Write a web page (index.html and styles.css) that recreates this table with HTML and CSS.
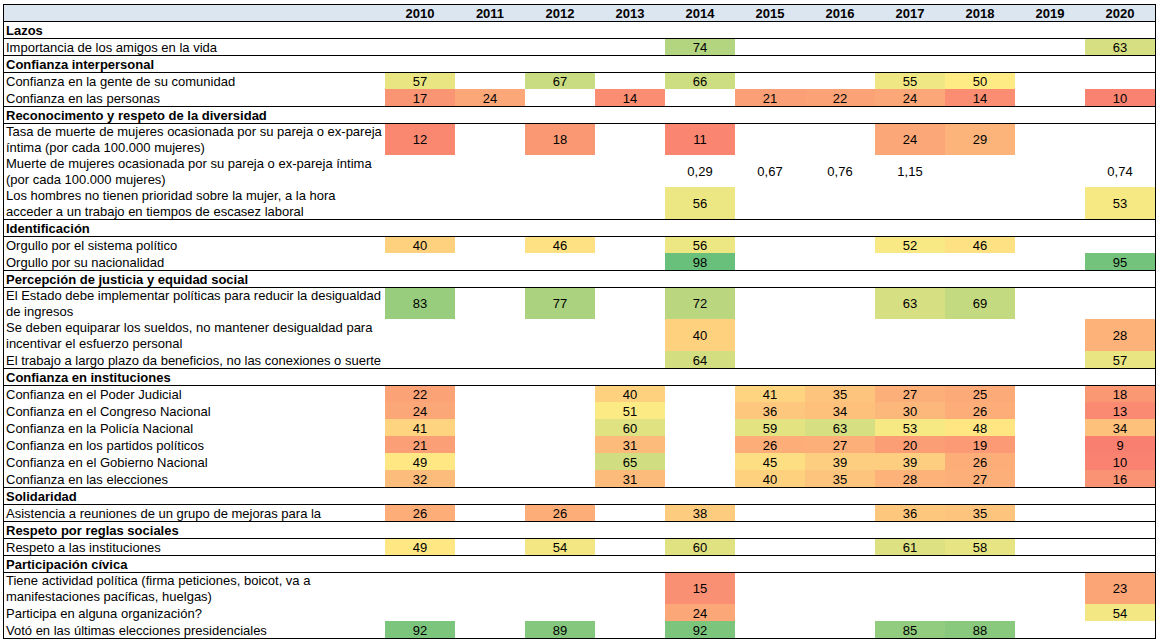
FILE: index.html
```html
<!DOCTYPE html>
<html lang="es">
<head>
<meta charset="utf-8">
<title>Indicadores</title>
<link rel="stylesheet" href="styles.css">
</head>
<body>
<div class="sheet">
  <div class="row head">
    <div class="lbl"></div>
    <div class="c">2010</div><div class="c">2011</div><div class="c">2012</div><div class="c">2013</div><div class="c">2014</div><div class="c">2015</div><div class="c">2016</div><div class="c">2017</div><div class="c">2018</div><div class="c">2019</div><div class="c">2020</div>
  </div>

  <div class="row grp"><div class="lbl">Lazos</div></div>
  <div class="row">
    <div class="lbl">Importancia de los amigos en la vida</div>
    <div class="c"></div><div class="c"></div><div class="c"></div><div class="c"></div><div class="c" data-v="74">74</div><div class="c"></div><div class="c"></div><div class="c"></div><div class="c"></div><div class="c"></div><div class="c" data-v="63">63</div>
  </div>

  <div class="row grp"><div class="lbl">Confianza interpersonal</div></div>
  <div class="row">
    <div class="lbl">Confianza en la gente de su comunidad</div>
    <div class="c" data-v="57">57</div><div class="c"></div><div class="c" data-v="67">67</div><div class="c"></div><div class="c" data-v="66">66</div><div class="c"></div><div class="c"></div><div class="c" data-v="55">55</div><div class="c" data-v="50">50</div><div class="c"></div><div class="c"></div>
  </div>
  <div class="row">
    <div class="lbl">Confianza en las personas</div>
    <div class="c" data-v="17">17</div><div class="c" data-v="24">24</div><div class="c"></div><div class="c" data-v="14">14</div><div class="c"></div><div class="c" data-v="21">21</div><div class="c" data-v="22">22</div><div class="c" data-v="24">24</div><div class="c" data-v="14">14</div><div class="c"></div><div class="c" data-v="10">10</div>
  </div>

  <div class="row grp"><div class="lbl">Reconocimento y respeto de la diversidad</div></div>
  <div class="row tall">
    <div class="lbl">Tasa de muerte de mujeres ocasionada por su pareja o ex-pareja<br>íntima (por cada 100.000 mujeres)</div>
    <div class="c" data-v="12">12</div><div class="c"></div><div class="c" data-v="18">18</div><div class="c"></div><div class="c" data-v="11">11</div><div class="c"></div><div class="c"></div><div class="c" data-v="24">24</div><div class="c" data-v="29">29</div><div class="c"></div><div class="c"></div>
  </div>
  <div class="row tall">
    <div class="lbl">Muerte de mujeres ocasionada por su pareja o ex-pareja íntima<br>(por cada 100.000 mujeres)</div>
    <div class="c"></div><div class="c"></div><div class="c"></div><div class="c"></div><div class="c">0,29</div><div class="c">0,67</div><div class="c">0,76</div><div class="c">1,15</div><div class="c"></div><div class="c"></div><div class="c">0,74</div>
  </div>
  <div class="row tall">
    <div class="lbl">Los hombres no tienen prioridad sobre la mujer, a la hora<br>acceder a un trabajo en tiempos de escasez laboral</div>
    <div class="c"></div><div class="c"></div><div class="c"></div><div class="c"></div><div class="c" data-v="56">56</div><div class="c"></div><div class="c"></div><div class="c"></div><div class="c"></div><div class="c"></div><div class="c" data-v="53">53</div>
  </div>

  <div class="row grp"><div class="lbl">Identificación</div></div>
  <div class="row">
    <div class="lbl">Orgullo por el sistema político</div>
    <div class="c" data-v="40">40</div><div class="c"></div><div class="c" data-v="46">46</div><div class="c"></div><div class="c" data-v="56">56</div><div class="c"></div><div class="c"></div><div class="c" data-v="52">52</div><div class="c" data-v="46">46</div><div class="c"></div><div class="c"></div>
  </div>
  <div class="row">
    <div class="lbl">Orgullo por su nacionalidad</div>
    <div class="c"></div><div class="c"></div><div class="c"></div><div class="c"></div><div class="c" data-v="98">98</div><div class="c"></div><div class="c"></div><div class="c"></div><div class="c"></div><div class="c"></div><div class="c" data-v="95">95</div>
  </div>

  <div class="row grp"><div class="lbl">Percepción de justicia y equidad social</div></div>
  <div class="row tall">
    <div class="lbl">El Estado debe implementar políticas para reducir la desigualdad<br>de ingresos</div>
    <div class="c" data-v="83">83</div><div class="c"></div><div class="c" data-v="77">77</div><div class="c"></div><div class="c" data-v="72">72</div><div class="c"></div><div class="c"></div><div class="c" data-v="63">63</div><div class="c" data-v="69">69</div><div class="c"></div><div class="c"></div>
  </div>
  <div class="row tall">
    <div class="lbl">Se deben equiparar los sueldos, no mantener desigualdad para<br>incentivar el esfuerzo personal</div>
    <div class="c"></div><div class="c"></div><div class="c"></div><div class="c"></div><div class="c" data-v="40">40</div><div class="c"></div><div class="c"></div><div class="c"></div><div class="c"></div><div class="c"></div><div class="c" data-v="28">28</div>
  </div>
  <div class="row">
    <div class="lbl">El trabajo a largo plazo da beneficios, no las conexiones o suerte</div>
    <div class="c"></div><div class="c"></div><div class="c"></div><div class="c"></div><div class="c" data-v="64">64</div><div class="c"></div><div class="c"></div><div class="c"></div><div class="c"></div><div class="c"></div><div class="c" data-v="57">57</div>
  </div>

  <div class="row grp"><div class="lbl">Confianza en instituciones</div></div>
  <div class="row">
    <div class="lbl">Confianza en el Poder Judicial</div>
    <div class="c" data-v="22">22</div><div class="c"></div><div class="c"></div><div class="c" data-v="40">40</div><div class="c"></div><div class="c" data-v="41">41</div><div class="c" data-v="35">35</div><div class="c" data-v="27">27</div><div class="c" data-v="25">25</div><div class="c"></div><div class="c" data-v="18">18</div>
  </div>
  <div class="row">
    <div class="lbl">Confianza en el Congreso Nacional</div>
    <div class="c" data-v="24">24</div><div class="c"></div><div class="c"></div><div class="c" data-v="51">51</div><div class="c"></div><div class="c" data-v="36">36</div><div class="c" data-v="34">34</div><div class="c" data-v="30">30</div><div class="c" data-v="26">26</div><div class="c"></div><div class="c" data-v="13">13</div>
  </div>
  <div class="row">
    <div class="lbl">Confianza en la Policía Nacional</div>
    <div class="c" data-v="41">41</div><div class="c"></div><div class="c"></div><div class="c" data-v="60">60</div><div class="c"></div><div class="c" data-v="59">59</div><div class="c" data-v="63">63</div><div class="c" data-v="53">53</div><div class="c" data-v="48">48</div><div class="c"></div><div class="c" data-v="34">34</div>
  </div>
  <div class="row">
    <div class="lbl">Confianza en los partidos políticos</div>
    <div class="c" data-v="21">21</div><div class="c"></div><div class="c"></div><div class="c" data-v="31">31</div><div class="c"></div><div class="c" data-v="26">26</div><div class="c" data-v="27">27</div><div class="c" data-v="20">20</div><div class="c" data-v="19">19</div><div class="c"></div><div class="c" data-v="9">9</div>
  </div>
  <div class="row">
    <div class="lbl">Confianza en el Gobierno Nacional</div>
    <div class="c" data-v="49">49</div><div class="c"></div><div class="c"></div><div class="c" data-v="65">65</div><div class="c"></div><div class="c" data-v="45">45</div><div class="c" data-v="39">39</div><div class="c" data-v="39">39</div><div class="c" data-v="26">26</div><div class="c"></div><div class="c" data-v="10">10</div>
  </div>
  <div class="row">
    <div class="lbl">Confianza en las elecciones</div>
    <div class="c" data-v="32">32</div><div class="c"></div><div class="c"></div><div class="c" data-v="31">31</div><div class="c"></div><div class="c" data-v="40">40</div><div class="c" data-v="35">35</div><div class="c" data-v="28">28</div><div class="c" data-v="27">27</div><div class="c"></div><div class="c" data-v="16">16</div>
  </div>

  <div class="row grp"><div class="lbl">Solidaridad</div></div>
  <div class="row">
    <div class="lbl">Asistencia a reuniones de un grupo de mejoras para la</div>
    <div class="c" data-v="26">26</div><div class="c"></div><div class="c" data-v="26">26</div><div class="c"></div><div class="c" data-v="38">38</div><div class="c"></div><div class="c"></div><div class="c" data-v="36">36</div><div class="c" data-v="35">35</div><div class="c"></div><div class="c"></div>
  </div>

  <div class="row grp"><div class="lbl">Respeto por reglas sociales</div></div>
  <div class="row">
    <div class="lbl">Respeto a las instituciones</div>
    <div class="c" data-v="49">49</div><div class="c"></div><div class="c" data-v="54">54</div><div class="c"></div><div class="c" data-v="60">60</div><div class="c"></div><div class="c"></div><div class="c" data-v="61">61</div><div class="c" data-v="58">58</div><div class="c"></div><div class="c"></div>
  </div>

  <div class="row grp"><div class="lbl">Participación cívica</div></div>
  <div class="row tall">
    <div class="lbl">Tiene actividad política (firma peticiones, boicot, va a<br>manifestaciones pacíficas, huelgas)</div>
    <div class="c"></div><div class="c"></div><div class="c"></div><div class="c"></div><div class="c" data-v="15">15</div><div class="c"></div><div class="c"></div><div class="c"></div><div class="c"></div><div class="c"></div><div class="c" data-v="23">23</div>
  </div>
  <div class="row">
    <div class="lbl">Participa en alguna organización?</div>
    <div class="c"></div><div class="c"></div><div class="c"></div><div class="c"></div><div class="c" data-v="24">24</div><div class="c"></div><div class="c"></div><div class="c"></div><div class="c"></div><div class="c"></div><div class="c" data-v="54">54</div>
  </div>
  <div class="row">
    <div class="lbl">Votó en las últimas elecciones presidenciales</div>
    <div class="c" data-v="92">92</div><div class="c"></div><div class="c" data-v="89">89</div><div class="c"></div><div class="c" data-v="92">92</div><div class="c"></div><div class="c"></div><div class="c" data-v="85">85</div><div class="c" data-v="88">88</div><div class="c"></div><div class="c"></div>
  </div>
</div>
<script src="script.js"></script>
</body>
</html>
```

FILE: styles.css
```css
html, body {
  margin: 0;
  padding: 0;
  background: #ffffff;
}

.sheet {
  margin: 4px 0 0 3px;
  width: 1151px;
  border: 1px solid #000000;
  font-family: "Liberation Sans", Arial, sans-serif;
  font-size: 13px;
  color: #000000;
}

.row {
  display: grid;
  grid-template-columns: 381px repeat(11, 70px);
}

.row > div {
  height: 15px;
  padding-top: 1px;
  line-height: 16px;
  border-top: 1px solid transparent;
  white-space: nowrap;
}

.row.tall > div {
  height: 31px;
  padding-top: 0;
  line-height: 31px;
}

.row.tall > .lbl {
  line-height: 15.5px;
}

.lbl {
  padding-left: 2px;
}

.c {
  text-align: center;
}

.grp > div,
.grp + .row > div {
  border-top-color: #000000;
}

.grp > .lbl {
  grid-column: 1 / -1;
  font-weight: bold;
}

.head > div {
  border-top: 0;
  background: #dce6f1;
  font-weight: bold;
}
```

FILE: script.js
```js
(function () {
  var red = [248, 105, 107];
  var yel = [255, 235, 132];
  var grn = [99, 190, 123];
  function mix(a, b, t) {
    return [0, 1, 2].map(function (i) {
      return Math.round(a[i] + (b[i] - a[i]) * t);
    });
  }
  var cells = document.querySelectorAll('.c[data-v]');
  for (var i = 0; i < cells.length; i++) {
    var v = parseFloat(cells[i].getAttribute('data-v'));
    var c = v <= 50 ? mix(red, yel, v / 50) : mix(yel, grn, (v - 50) / 50);
    cells[i].style.backgroundColor = 'rgb(' + c.join(',') + ')';
  }
})();
```
